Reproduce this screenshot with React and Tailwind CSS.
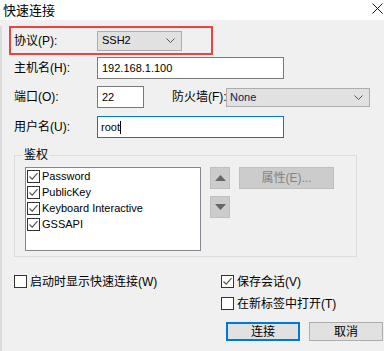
import React from "react";

const font = { fontFamily: '"Liberation Sans", "Noto Sans CJK SC", sans-serif' };

const Check = ({ checked }) => (
  <span className="w-[13px] h-[13px] border border-[#333] bg-white flex items-center justify-center shrink-0">
    {checked && (
      <svg width="11" height="11" viewBox="0 0 11 11">
        <path d="M1.5 5.5 L4.2 8.2 L9.5 2.2" stroke="#555" strokeWidth="1.2" fill="none" />
      </svg>
    )}
  </span>
);

const Chevron = () => (
  <svg width="9" height="5" viewBox="0 0 9 5" className="shrink-0">
    <path d="M0.5 0.5 L4.5 4.5 L8.5 0.5" stroke="#555" strokeWidth="1" fill="none" />
  </svg>
);

const App = () => {
  return (
    <div className="w-[384px] h-[351px] overflow-hidden bg-[#f0f0f0] text-black" style={font}>
      {/* title bar */}
      <div className="h-[20px] bg-white flex items-center justify-between pl-[3px] pr-[1px]">
        <span className="text-[13px] leading-none">快速连接</span>
        <svg width="11" height="11" viewBox="0 0 11 11" className="mb-[4px]">
          <path d="M0.5 0.5 L10.5 10.5 M10.5 0.5 L0.5 10.5" stroke="#111" strokeWidth="1" />
        </svg>
      </div>

      <div className="h-[331px] border-l-[2px] border-[#dcdcdc]">
        {/* protocol row in red frame */}
        <div className="ml-[7px] mt-[6px] w-[204px] h-[29px] border-[2px] border-[#f04040] flex items-center pl-[3px]">
          <span className="w-[83px] text-[12px]">协议(P):</span>
          <div className="w-[85px] h-[20px] bg-[#e1e1e1] border border-[#adadad] flex items-center justify-between pl-[4px] pr-[6px]">
            <span className="text-[11px]">SSH2</span>
            <Chevron />
          </div>
        </div>

        {/* host */}
        <div className="mt-[2px] pl-[12px] h-[22px] flex items-center">
          <span className="w-[83px] text-[12px]">主机名(H):</span>
          <div className="w-[187px] h-[22px] bg-white border border-[#7a7a7a] flex items-center pl-[4px] text-[11px]">
            192.168.1.100
          </div>
        </div>

        {/* port + firewall */}
        <div className="mt-[7px] pl-[12px] h-[22px] flex items-center">
          <span className="w-[83px] text-[12px]">端口(O):</span>
          <div className="w-[47px] h-[22px] bg-white border border-[#7a7a7a] flex items-center pl-[4px] text-[11px]">
            22
          </div>
          <span className="ml-[28px] w-[54px] shrink-0 whitespace-nowrap text-[12px]">防火墙(F):</span>
          <div className="w-[144px] h-[19px] bg-[#e1e1e1] border border-[#adadad] flex items-center justify-between pl-[3px] pr-[6px]">
            <span className="text-[11px] text-[#0b1a5e]">None</span>
            <Chevron />
          </div>
        </div>

        {/* user */}
        <div className="mt-[8px] pl-[12px] h-[22px] flex items-center">
          <span className="w-[83px] text-[12px]">用户名(U):</span>
          <div className="w-[187px] h-[22px] bg-white border border-[#0078d7] flex items-center pl-[3px] text-[11px]">
            root<span className="w-px h-[13px] bg-black" />
          </div>
        </div>

        {/* auth group */}
        <div className="relative ml-[12px] mt-[17px] w-[343px] h-[102px] border border-[#dcdcdc] flex pl-[10px] pt-[11px]">
          <span className="absolute -top-[9px] left-[8px] px-[1px] bg-[#f0f0f0] text-[12px] leading-[16px]">鉴权</span>
          <div className="w-[176px] h-[84px] bg-white border border-[#828790] flex flex-col">
            {["Password", "PublicKey", "Keyboard Interactive", "GSSAPI"].map((item) => (
              <div key={item} className="h-[16px] flex items-center pl-[1px] gap-[2px] text-[11px]">
                <Check checked />
                <span>{item}</span>
              </div>
            ))}
          </div>
          <div className="ml-[9px] flex flex-col gap-[7px]">
            <div className="w-[20px] h-[22px] bg-[#cccccc] border border-[#bfbfbf] flex items-center justify-center">
              <svg width="11" height="6" viewBox="0 0 11 6">
                <path d="M0 6 L5.5 0 L11 6 Z" fill="#666" />
              </svg>
            </div>
            <div className="w-[20px] h-[22px] bg-[#cccccc] border border-[#bfbfbf] flex items-center justify-center">
              <svg width="11" height="6" viewBox="0 0 11 6">
                <path d="M0 0 L5.5 6 L11 0 Z" fill="#666" />
              </svg>
            </div>
          </div>
          <div className="ml-[9px] w-[95px] h-[22px] bg-[#cccccc] border border-[#bfbfbf] flex items-center justify-center text-[12px] text-[#838383]">
            属性(E)...
          </div>
        </div>

        {/* options */}
        <div className="mt-[18px] pl-[12px] flex">
          <label className="w-[207px] h-[13px] flex items-center gap-[3px] text-[12px]">
            <Check />
            <span>启动时显示快速连接(W)</span>
          </label>
          <div className="flex flex-col gap-[9px]">
            <label className="h-[13px] flex items-center gap-[3px] text-[12px]">
              <Check checked />
              <span>保存会话(V)</span>
            </label>
            <label className="h-[13px] flex items-center gap-[3px] text-[12px]">
              <Check />
              <span>在新标签中打开(T)</span>
            </label>
          </div>
        </div>

        {/* buttons */}
        <div className="mt-[12px] pl-[224px] flex gap-[9px]">
          <div className="w-[74px] h-[19px] bg-[#e1e1e1] border-[2px] border-[#0078d7] flex items-center justify-center text-[12px]">
            连接
          </div>
          <div className="w-[74px] h-[19px] bg-[#e1e1e1] border border-[#adadad] flex items-center justify-center text-[12px]">
            取消
          </div>
        </div>
      </div>
    </div>
  );
};

export default App;
